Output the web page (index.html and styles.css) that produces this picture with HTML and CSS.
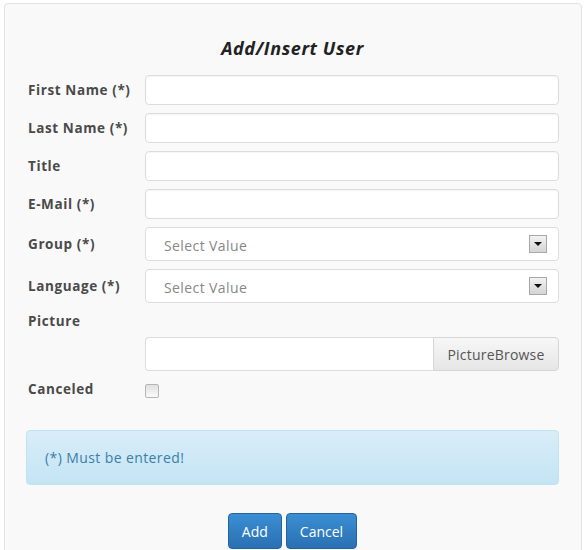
FILE: index.html
```html
<!DOCTYPE html>
<html lang="en">
<head>
	<meta charset="UTF-8">
	<title>Add/Insert User</title>
	<link rel="stylesheet" href="styles.css">
</head>
<body>
	<div class="panel">
		<h2 class="title">Add/Insert User</h2>
		<form class="user-form">
			<div class="row">
				<label>First Name (*)</label>
				<input class="field" type="text">
			</div>
			<div class="row">
				<label>Last Name (*)</label>
				<input class="field" type="text">
			</div>
			<div class="row">
				<label>Title</label>
				<input class="field" type="text">
			</div>
			<div class="row">
				<label>E-Mail (*)</label>
				<input class="field" type="text">
			</div>
			<div class="row">
				<label>Group (*)</label>
				<div class="select"><span>Select Value</span><i class="arrow"></i></div>
			</div>
			<div class="row">
				<label>Language (*)</label>
				<div class="select"><span>Select Value</span><i class="arrow"></i></div>
			</div>
			<div class="row row-label">
				<label>Picture</label>
			</div>
			<div class="row">
				<span></span>
				<div class="file">
					<input class="file-name" type="text">
					<span class="browse">PictureBrowse</span>
				</div>
			</div>
			<div class="row row-check">
				<label>Canceled</label>
				<span class="check"></span>
			</div>

			<div class="alert">(*) Must be entered!</div>

			<div class="actions">
				<button type="button" class="btn">Add</button>
				<button type="button" class="btn">Cancel</button>
			</div>
		</form>
	</div>
</body>
</html>
```

FILE: styles.css
```css
*{margin: 0;padding: 0;box-sizing: border-box;}
body {background: #fff;font-family: "Open Sans", "Liberation Sans", sans-serif;color: #444;}
.panel {margin: 3px 4px 0 4px;height: 560px;border: 1px solid #e2e2e2;border-radius: 4px;background: #f9f9f9;padding: 32px 22px 0 21px;}
.title {font-size: 18px;line-height: 24px;font-style: italic;font-weight: bold;letter-spacing: 0.6px;text-align: center;color: #222;margin-bottom: 15px;}
.user-form {display: flex;flex-direction: column;}
.row {display: grid;grid-template-columns: 119px 1fr;align-items: center;margin-bottom: 8px;}
.row label {padding-left: 2px;font-size: 13.5px;font-weight: bold;letter-spacing: 0.6px;color: #4a4a4a;}
.field {height: 30px;border: 1px solid #dcdcdc;border-radius: 4px;background: #fff;box-shadow: inset 0 1px 1px rgba(0,0,0,.04);}
.select {height: 34px;border: 1px solid #dcdcdc;border-radius: 4px;background: #fff;display: flex;align-items: center;justify-content: space-between;padding: 0 11px 0 18px;font-size: 14px;letter-spacing: 0.4px;color: #888;}
.select span {padding-top: 3px;}
.arrow {width: 18px;height: 18px;border: 1px solid #a8a8a8;background: linear-gradient(#f2f2f2, #d4d4d4);position: relative;}
.arrow:after {content: "";position: absolute;left: 4px;top: 6px;border-left: 4px solid transparent;border-right: 4px solid transparent;border-top: 4px solid #111;}
.row-label {margin-bottom: 6px;height: 20px;}
.file {display: flex;height: 34px;}
.file-name {flex: 1;border: 1px solid #dcdcdc;border-right: none;border-radius: 4px 0 0 4px;background: #fff;}
.browse {width: 126px;border: 1px solid #d6d6d6;border-radius: 0 4px 4px 0;background: linear-gradient(#f7f7f7, #e6e6e6);font-size: 14px;letter-spacing: 0.2px;color: #555;display: flex;align-items: center;justify-content: center;}
.row-check {height: 20px;}
.check {width: 14px;height: 14px;margin-top: 4px;border: 1px solid #b5b5b5;border-radius: 2px;background: linear-gradient(#e0e0e0, #fafafa);}
.alert {margin-top: 23px;height: 55px;border: 1px solid #bfe3f2;border-radius: 4px;background: linear-gradient(#d9edf8, #c4e4f4);padding: 0 18px;font-size: 14px;letter-spacing: 0.4px;color: #3a7fa8;display: flex;align-items: center;}
.actions {display: flex;justify-content: center;gap: 4px;margin-top: 28px;}
.btn {height: 36px;padding: 0 13px;border: 1px solid #24639c;border-radius: 4px;background: linear-gradient(#3b8ed3, #2a70b3);color: #fff;font-family: "Open Sans", "Liberation Sans", sans-serif;font-size: 14px;}
```
